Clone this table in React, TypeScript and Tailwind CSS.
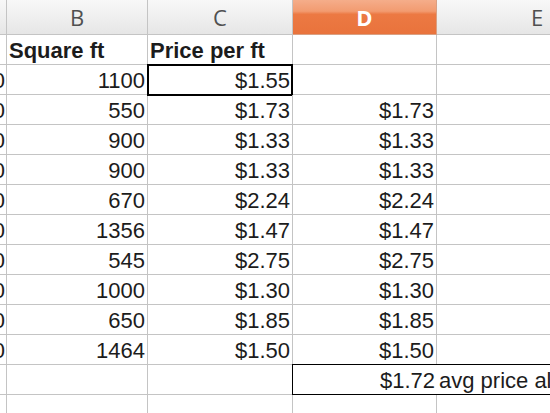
import React from "react";

const B = ["Square ft", "1100", "550", "900", "900", "670", "1356", "545", "1000", "650", "1464", "", ""];
const C = ["Price per ft", "$1.55", "$1.73", "$1.33", "$1.33", "$2.24", "$1.47", "$2.75", "$1.30", "$1.85", "$1.50", "", ""];
const D = ["", "", "$1.73", "$1.33", "$1.33", "$2.24", "$1.47", "$2.75", "$1.30", "$1.85", "$1.50", "$1.72", ""];
const A = ["", "0", "0", "0", "0", "0", "0", "0", "0", "0", "0", "", ""];

const line = "border-[#c4c4c4]";
const cellFont = { fontFamily: '"Liberation Sans", Arial, sans-serif' };
const headFont = { fontFamily: '"Open Sans", sans-serif' };

export default function App() {
  return (
    <div className="w-[550px] h-[413px] overflow-hidden bg-white" style={cellFont}>
      <div className="grid grid-cols-[7px_141px_145px_144px_200px] auto-rows-[30px] grid-rows-[35px]">
        {/* header row */}
        <div className={`border-r border-b ${line} bg-[linear-gradient(to_bottom,#f8f8f8,#e6e6e6)]`} />
        {["B", "C"].map((l) => (
          <div
            key={l}
            className={`border-r border-b ${line} bg-[linear-gradient(to_bottom,#f8f8f8,#e6e6e6)] flex items-center justify-center text-[22px] text-[#505050]`}
            style={headFont}
          >
            {l}
          </div>
        ))}
        <div
          className="border-r border-b border-[#d9a083] bg-[linear-gradient(to_bottom,#f5ad8a_0%,#f29b70_33%,#ec7943_42%,#e9733c_100%)] flex items-center justify-center text-[22px] font-bold text-white"
          style={headFont}
        >
          D
        </div>
        <div
          className={`border-b ${line} bg-[linear-gradient(to_bottom,#f8f8f8,#e6e6e6)] flex items-center justify-center text-[22px] text-[#505050]`}
          style={headFont}
        >
          E
        </div>

        {B.map((_, i) => (
          <React.Fragment key={i}>
            <div className={`border-r border-b ${line} overflow-hidden flex items-center justify-end pr-[1px] pt-[2px] text-[22px] text-[#1c1c1c]`}>
              <span className="shrink-0">{A[i]}</span>
            </div>
            <div
              className={`border-r border-b ${line} flex items-center px-[2px] pt-[2px] text-[22px] text-[#1c1c1c] ${
                i === 0 ? "justify-start font-bold" : "justify-end"
              }`}
            >
              {B[i]}
            </div>
            <div
              className={`relative border-r border-b ${line} flex items-center px-[2px] pt-[2px] text-[22px] text-[#1c1c1c] ${
                i === 0 ? "justify-start font-bold" : "justify-end"
              }`}
            >
              {C[i]}
              {i === 1 && (
                <div className="absolute -left-px -top-px -right-px -bottom-[2px] border-2 border-black" />
              )}
            </div>
            <div
              className={`relative ${i === 11 ? "" : "border-r"} border-b ${line} flex items-center justify-end px-[2px] pt-[2px] text-[22px] text-[#1c1c1c]`}
            >
              {D[i]}
              {i === 11 && (
                <div className="absolute -left-px -top-px right-[-260px] -bottom-px border border-black" />
              )}
            </div>
            <div className={`border-b ${line} flex items-center px-[2px] pt-[2px] text-[22px] text-[#1c1c1c] whitespace-nowrap overflow-visible`}>
              {i === 11 ? "avg price all" : ""}
            </div>
          </React.Fragment>
        ))}
      </div>
    </div>
  );
}
